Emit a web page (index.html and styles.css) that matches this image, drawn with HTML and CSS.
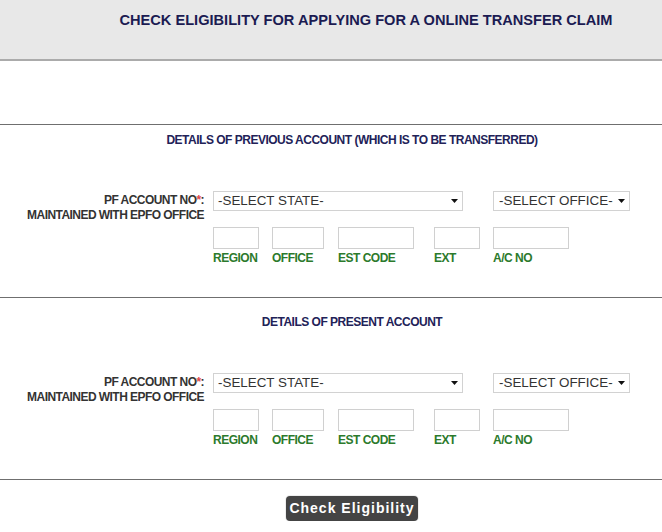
FILE: index.html
```html
<!DOCTYPE html>
<html lang="en">
<head>
<meta charset="utf-8">
<title>Check Eligibility</title>
<link rel="stylesheet" href="styles.css">
</head>
<body>
<div class="page">
  <header class="hdr">
    <h1 class="title">CHECK ELIGIBILITY FOR APPLYING FOR A ONLINE TRANSFER CLAIM</h1>
  </header>

  <section class="sec sec-prev">
    <h2 class="sec-title">DETAILS OF PREVIOUS ACCOUNT (WHICH IS TO BE TRANSFERRED)</h2>
    <div class="row">
      <div class="lbl">
        <div>PF ACCOUNT NO<span class="req">*</span>:</div>
        <div>MAINTAINED WITH EPFO OFFICE</div>
      </div>
      <div class="ctl">
        <div class="selects">
          <span class="sel sel-state">
            <select><option>-SELECT STATE-</option></select>
            <svg class="arrow" width="7" height="4" viewBox="0 0 7 4"><polygon points="0,0 7,0 3.5,4" fill="#111"/></svg>
          </span>
          <span class="sel sel-office">
            <select><option>-SELECT OFFICE-</option></select>
            <svg class="arrow" width="7" height="4" viewBox="0 0 7 4"><polygon points="0,0 7,0 3.5,4" fill="#111"/></svg>
          </span>
        </div>
        <div class="fields">
          <label class="fld"><input class="in in-s" type="text"><span class="fld-name">REGION</span></label>
          <label class="fld"><input class="in in-m" type="text"><span class="fld-name">OFFICE</span></label>
          <label class="fld"><input class="in in-l" type="text"><span class="fld-name">EST CODE</span></label>
          <label class="fld"><input class="in in-s" type="text"><span class="fld-name">EXT</span></label>
          <label class="fld"><input class="in in-l" type="text"><span class="fld-name">A/C NO</span></label>
        </div>
      </div>
    </div>
  </section>

  <section class="sec sec-present">
    <h2 class="sec-title">DETAILS OF PRESENT ACCOUNT</h2>
    <div class="row">
      <div class="lbl">
        <div>PF ACCOUNT NO<span class="req">*</span>:</div>
        <div>MAINTAINED WITH EPFO OFFICE</div>
      </div>
      <div class="ctl">
        <div class="selects">
          <span class="sel sel-state">
            <select><option>-SELECT STATE-</option></select>
            <svg class="arrow" width="7" height="4" viewBox="0 0 7 4"><polygon points="0,0 7,0 3.5,4" fill="#111"/></svg>
          </span>
          <span class="sel sel-office">
            <select><option>-SELECT OFFICE-</option></select>
            <svg class="arrow" width="7" height="4" viewBox="0 0 7 4"><polygon points="0,0 7,0 3.5,4" fill="#111"/></svg>
          </span>
        </div>
        <div class="fields">
          <label class="fld"><input class="in in-s" type="text"><span class="fld-name">REGION</span></label>
          <label class="fld"><input class="in in-m" type="text"><span class="fld-name">OFFICE</span></label>
          <label class="fld"><input class="in in-l" type="text"><span class="fld-name">EST CODE</span></label>
          <label class="fld"><input class="in in-s" type="text"><span class="fld-name">EXT</span></label>
          <label class="fld"><input class="in in-l" type="text"><span class="fld-name">A/C NO</span></label>
        </div>
      </div>
    </div>
  </section>

  <div class="actions">
    <button class="btn" type="button">Check Eligibility</button>
  </div>
</div>
</body>
</html>
```
FILE: styles.css
```css
* { box-sizing: border-box; }

html, body {
  margin: 0;
  padding: 0;
  background: #fff;
}

body {
  font-family: "Liberation Sans", Arial, sans-serif;
  color: #333;
}

.page {
  width: 662px;
}

.hdr {
  height: 61px;
  background: #e8e8e8;
  border-bottom: 2px solid #ababab;
  padding: 11px 0 0 70px;
  margin-bottom: 63px;
}

.title {
  margin: 0;
  font-size: 14.6px;
  line-height: 18px;
  font-weight: bold;
  color: #1b1b52;
  text-align: center;
}

.sec {
  border-top: 1px solid #6f6f6f;
  padding-bottom: 32px;
}

.sec-prev { padding-top: 8px; }
.sec-present { padding-top: 17px; }

.sec-title {
  margin: 0 0 44px;
  padding-left: 42px;
  font-size: 12px;
  letter-spacing: -0.5px;
  line-height: 14px;
  font-weight: bold;
  color: #222258;
  text-align: center;
}

.row {
  display: flex;
  align-items: flex-start;
}

.lbl {
  width: 204px;
  margin-top: 2px;
  text-align: right;
  font-size: 12px;
  letter-spacing: -0.55px;
  line-height: 15px;
  font-weight: bold;
  color: #333;
}

.req { color: #e04848; }

.ctl {
  margin-left: 9px;
}

.selects {
  display: flex;
}

.sel {
  position: relative;
  display: block;
  height: 20px;
}

.sel-state { width: 250px; }
.sel-office { width: 137px; margin-left: 30px; }

.sel select {
  -webkit-appearance: none;
  appearance: none;
  display: block;
  width: 100%;
  height: 20px;
  margin: 0;
  padding: 0 0 0 4px;
  border: 1px solid #d2d2d2;
  border-radius: 0;
  background: #fff;
  font-family: "Liberation Sans", Arial, sans-serif;
  font-size: 13.4px;
  line-height: 18px;
  color: #333;
}

.sel-office select { padding-left: 5px; }

.arrow {
  position: absolute;
  right: 5px;
  top: 8px;
}

.fields {
  display: grid;
  grid-template-columns: 59px 66px 96px 59px 76px;
  margin-top: 16px;
}

.fld {
  display: block;
}

.in {
  display: block;
  height: 22px;
  margin: 0;
  padding: 0;
  border: 1px solid #d0d0d0;
  background: #fff;
}

.in-s { width: 46px; }
.in-m { width: 52px; }
.in-l { width: 76px; }

.fld-name {
  display: block;
  margin-top: 2px;
  font-size: 12px;
  letter-spacing: -0.5px;
  line-height: 14px;
  font-weight: bold;
  color: #2c7a2c;
  white-space: nowrap;
}

.actions {
  border-top: 1px solid #6f6f6f;
  padding: 16px 0 0 42px;
  text-align: center;
}

.btn {
  display: inline-block;
  width: 132px;
  height: 25px;
  margin: 0;
  padding: 0;
  border: 0;
  border-radius: 4px;
  background: #444;
  box-shadow: 0 0 0 1px #eeeeee;
  color: #fff;
  font-family: "Liberation Sans", Arial, sans-serif;
  font-size: 14px;
  font-weight: bold;
  letter-spacing: 1px;
  line-height: 25px;
}
```
